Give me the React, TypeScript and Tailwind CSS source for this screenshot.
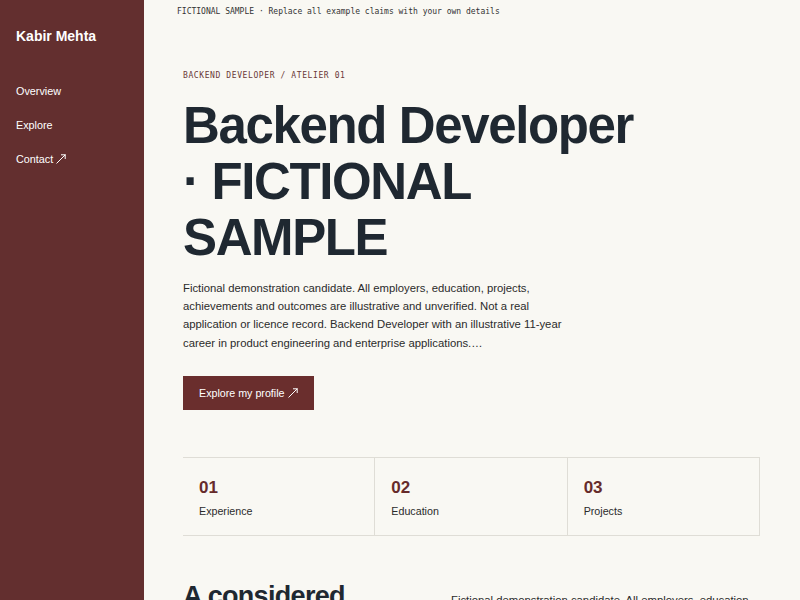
import React from "react";

function Arrow({ className = "" }: { className?: string }) {
  return (
    <svg
      viewBox="0 0 10 10"
      className={className}
      fill="none"
      stroke="currentColor"
      strokeWidth="1"
      strokeLinecap="round"
      strokeLinejoin="round"
    >
      <path d="M0.8 9.2 L9.2 0.8" />
      <path d="M5.4 0.8 H9.2 V4.6" />
    </svg>
  );
}

const sans = { fontFamily: '"Liberation Sans", Arial, Helvetica, sans-serif' };

export default function App() {
  const stats = [
    { n: "01", label: "Experience" },
    { n: "02", label: "Education" },
    { n: "03", label: "Projects" },
  ];
  return (
    <div
      className="flex h-screen overflow-hidden bg-[#f9f8f3] font-['Liberation_Sans',Arial,sans-serif]"
      style={sans}
    >
      <aside className="w-[144px] shrink-0 bg-[#632f2f] px-4 pt-[26px] text-white">
        <div className="text-[14px] font-bold leading-[20px]">Kabir Mehta</div>
        <nav className="mt-[37px] flex flex-col gap-[17.8px] text-[10.8px] leading-[16px]">
          <a className="block">Overview</a>
          <a className="block">Explore</a>
          <a className="flex items-center gap-[3px]">
            Contact <Arrow className="h-[10px] w-[10px]" />
          </a>
        </nav>
      </aside>

      <main className="min-w-0 flex-1">
        <div className="pl-[33px] pt-[6px] font-['DejaVu_Sans_Mono',monospace] text-[8px] leading-[12px] text-[#333333]">
          FICTIONAL SAMPLE · Replace all example claims with your own details
        </div>

        <section className="pl-[39px] pr-[40px] pt-[52px]">
          <div className="font-['DejaVu_Sans_Mono',monospace] text-[8px] leading-[12px] tracking-[0.6px] text-[#6b3838]">
            BACKEND DEVELOPER / ATELIER 01
          </div>

          <h1 className="mt-[16px] max-w-[464px] text-[51px] font-bold leading-[56px] tracking-[-0.027em] text-[#1f2831]">
            Backend Developer · FICTIONAL SAMPLE
          </h1>

          <p className="mt-[12.6px] max-w-[390px] text-[11.3px] leading-[18.4px] text-[#2b2b2b]">
            Fictional demonstration candidate. All employers, education, projects,
            achievements and outcomes are illustrative and unverified. Not a real
            application or licence record. Backend Developer with an illustrative
            11-year career in product engineering and enterprise applications.…
          </p>

          <button className="mt-[24px] flex h-[34px] w-[131px] items-center gap-[3px] bg-[#6a2e2d] px-4 text-[10.7px] text-white">
            Explore my profile <Arrow className="h-[10px] w-[10px]" />
          </button>

          <div className="mt-[47px] grid grid-cols-3 border-y border-[#dfddd6]">
            {stats.map((s) => (
              <div
                key={s.n}
                className="border-r border-[#dfddd6] pl-4 pt-[18.3px] pb-[16.2px]"
              >
                <div className="text-[17px] font-bold leading-[22px] text-[#662b2b]">
                  {s.n}
                </div>
                <div className="mt-[4.5px] text-[10.7px] leading-[16px] text-[#2b2b2b]">
                  {s.label}
                </div>
              </div>
            ))}
          </div>

          <div className="mt-[45px] grid grid-cols-[228px_1fr] gap-[40px] pb-10">
            <h2 className="text-[27px] font-bold leading-[30px] tracking-[-0.025em] text-[#1f2831]">
              A considered approach
            </h2>
            <p className="pt-[10px] text-[11.3px] leading-[18.4px] text-[#2b2b2b]">
              Fictional demonstration candidate. All employers, education, projects,
              achievements and outcomes are illustrative and unverified.
            </p>
          </div>
        </section>
      </main>
    </div>
  );
}
